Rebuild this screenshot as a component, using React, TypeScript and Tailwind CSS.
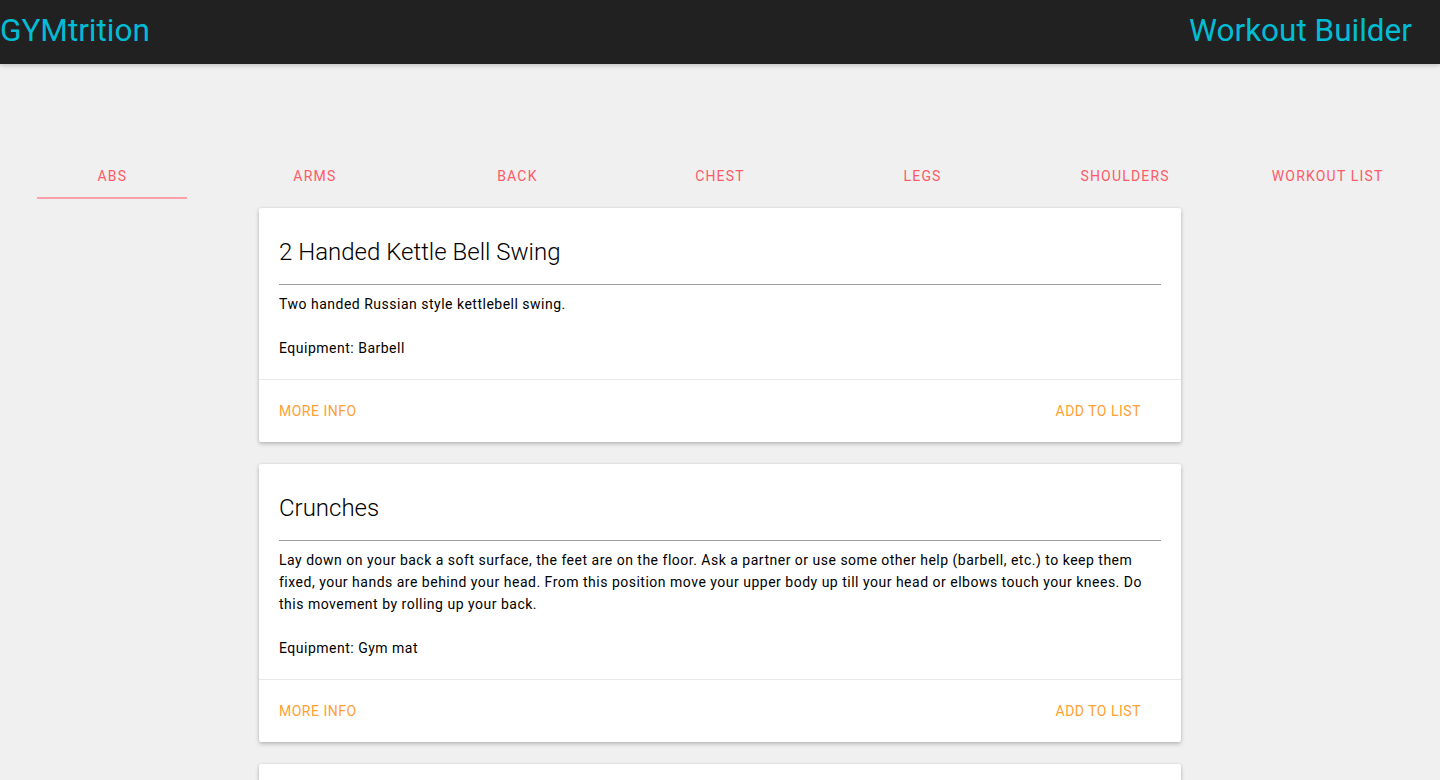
import { useState } from "react";

const tabs = ["Abs", "Arms", "Back", "Chest", "Legs", "Shoulders", "Workout List"];

const exercises = [
  {
    name: "2 Handed Kettle Bell Swing",
    desc: "Two handed Russian style kettlebell swing.",
    equipment: "Barbell",
  },
  {
    name: "Crunches",
    desc: "Lay down on your back a soft surface, the feet are on the floor. Ask a partner or use some other help (barbell, etc.) to keep them fixed, your hands are behind your head. From this position move your upper body up till your head or elbows touch your knees. Do this movement by rolling up your back.",
    equipment: "Gym mat",
  },
  {
    name: "Plank",
    desc: "Get into a position on the floor supporting your weight on your forearms and toes. Keep your body straight and hold the position.",
    equipment: "Gym mat",
  },
];

export default function App() {
  const [active, setActive] = useState(0);

  return (
    <div className="min-h-screen bg-[#f0f0f0] font-['Roboto',sans-serif]">
      {/* HEADER */}
      <header className="relative z-10 flex h-16 items-center justify-between bg-[#212121] pr-[28px] shadow-[0_1px_6px_rgba(0,0,0,0.12),0_1px_4px_rgba(0,0,0,0.12)]">
        <h1 className="pb-[2px] text-[31.5px] font-normal leading-none text-[#00bcd4]">GYMtrition</h1>
        <h1 className="pb-[2px] text-[31.5px] font-normal leading-none text-[#00bcd4]">Workout Builder</h1>
      </header>

      {/* TABS */}
      <nav className="mt-[87px] grid grid-cols-7 px-[11px]">
        {tabs.map((t, i) => (
          <button
            key={t}
            onClick={() => setActive(i)}
            className="flex h-12 flex-col items-center justify-end"
          >
            <span className="flex flex-1 items-center pt-[4px] text-[14px] font-normal uppercase tracking-[1.2px] text-[#ff5a68]">
              {t}
            </span>
            <span
              className={
                i === active
                  ? "h-[2px] w-[150px] bg-[#ffa0a8]"
                  : "h-[2px] w-[150px] bg-transparent"
              }
            />
          </button>
        ))}
      </nav>

      {/* CARDS */}
      <main className="mx-auto mt-[9px] flex w-[922px] flex-col gap-[22px]">
        {exercises.map((ex) => (
          <div
            key={ex.name}
            className="rounded-[2px] bg-white shadow-[0_2px_4px_rgba(0,0,0,0.22),0_0_3px_rgba(0,0,0,0.08)]"
          >
            <div className="px-5 pt-[28px] pb-5">
              <h2 className="text-[24px] font-light leading-[32px] text-black">{ex.name}</h2>
              <div className="mt-[16px] h-px bg-[#9e9e9e]" />
              <p className="mt-[8px] text-[14px] leading-[22px] tracking-[0.5px] text-black">{ex.desc}</p>
              <p className="mt-[22px] text-[14px] leading-[22px] tracking-[0.5px] text-black">
                Equipment: {ex.equipment}
              </p>
            </div>
            <div className="flex h-[63px] items-center justify-between border-t border-[#e8e8e8] pl-5 pr-10">
              <button className="text-[14px] font-normal uppercase tracking-[0.5px] text-[#ffa033]">More Info</button>
              <button className="text-[14px] font-normal uppercase tracking-[0.5px] text-[#ffa033]">Add to List</button>
            </div>
          </div>
        ))}
      </main>
    </div>
  );
}
